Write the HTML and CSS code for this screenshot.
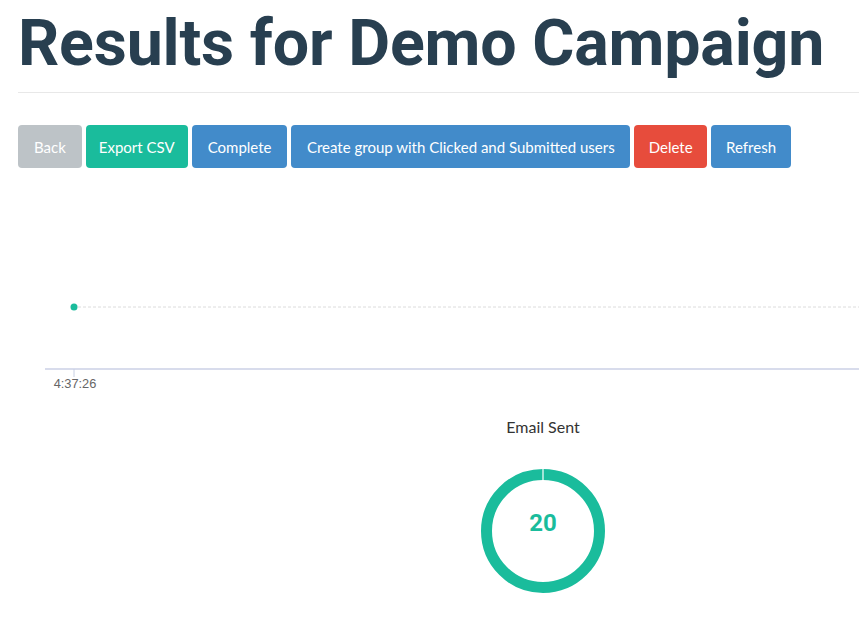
FILE: index.html
```html
<!DOCTYPE html>
<html>
<head>
<meta charset="utf-8">
<link rel="stylesheet" href="styles.css">
</head>
<body>
<div class="page">
  <h1 class="title">Results for Demo Campaign</h1>
  <hr class="rule">
  <div class="actions">
    <button class="btn btn-back">Back</button>
    <button class="btn btn-green">Export CSV</button>
    <button class="btn btn-blue">Complete</button>
    <button class="btn btn-blue btn-create">Create group with Clicked and Submitted users</button>
    <button class="btn btn-red">Delete</button>
    <button class="btn btn-blue btn-refresh">Refresh</button>
  </div>
  <div class="timeline">
    <svg class="timeline-svg" width="841" height="232" viewBox="0 0 841 232">
      <line x1="60" y1="127" x2="841" y2="127" stroke="#dcdcdc" stroke-width="1" stroke-dasharray="3,2"/>
      <circle cx="56" cy="127" r="3.5" fill="#1abc9c"/>
      <line x1="27" y1="189" x2="841" y2="189" stroke="#d8dcec" stroke-width="2"/>
      <line x1="56" y1="189" x2="56" y2="197" stroke="#c8d0e4" stroke-width="1"/>
      <text x="57" y="208" text-anchor="middle" class="tick-label">4:37:26</text>
    </svg>
  </div>
  <div class="stats">
    <div class="stat">
      <div class="stat-title">Email Sent</div>
      <div class="donut">
        <svg width="130" height="130" viewBox="0 0 130 130">
          <circle cx="65" cy="65" r="56.5" fill="none" stroke="#1abc9c" stroke-width="11"/>
          <line x1="65" y1="3" x2="65" y2="15" stroke="#ffffff" stroke-width="1.2"/>
        </svg>
        <span class="donut-value">20</span>
      </div>
    </div>
  </div>
</div>
</body>
</html>
```
FILE: styles.css
```css
html, body {
  margin: 0;
  padding: 0;
  background: #ffffff;
}
body {
  font-family: Lato, "Noto Sans", sans-serif;
  overflow: hidden;
}
.page {
  padding: 0 0 0 18px;
}
.title {
  font-family: Roboto, "Liberation Sans", sans-serif;
  font-weight: 700;
  font-size: 64.5px;
  line-height: 1;
  color: #283f50;
  margin: 0;
  padding-top: 11px;
  height: 72px;
  letter-spacing: -0.2px;
}
.rule {
  border: 0;
  border-top: 1px solid #e8e8e8;
  margin: 9px 0 0 0;
}
.actions {
  display: flex;
  gap: 4px;
  margin-top: 32px;
}
.btn {
  height: 43px;
  border: 0;
  border-radius: 4px;
  color: #ffffff;
  font-family: Lato, "Noto Sans", sans-serif;
  font-size: 15px;
  padding: 0 15px;
  cursor: pointer;
}
.btn-back { background: #bdc3c7; padding: 0 16px; }
.btn-green { background: #1abc9c; padding: 0 13px; }
.btn-blue { background: #428bca; padding: 0 16px; }
.btn-create { padding: 0 15.5px; }
.btn-refresh { padding: 0 15px; }
.btn-red { background: #e74c3c; padding: 0 14.5px; }
.timeline {
  margin-top: 12px;
  height: 232px;
}
.timeline-svg {
  display: block;
}
.tick-label {
  font-family: "Liberation Sans", sans-serif;
  font-size: 12.8px;
  fill: #666666;
}
.stats {
  display: flex;
  justify-content: flex-start;
  padding-left: 435px;
}
.stat {
  display: flex;
  flex-direction: column;
  align-items: center;
  width: 180px;
}
.stat-title {
  font-family: Lato, "Noto Sans", sans-serif;
  font-size: 16px;
  color: #333333;
  margin-top: 5px;
}
.donut {
  position: relative;
  width: 130px;
  height: 130px;
  margin-top: 30px;
}
.donut svg { display: block; }
.donut-value {
  position: absolute;
  left: 0;
  right: 0;
  top: 50%;
  transform: translateY(-78%);
  text-align: center;
  font-family: Roboto, "Liberation Sans", sans-serif;
  font-weight: 700;
  font-size: 24px;
  color: #1abc9c;
}
```
